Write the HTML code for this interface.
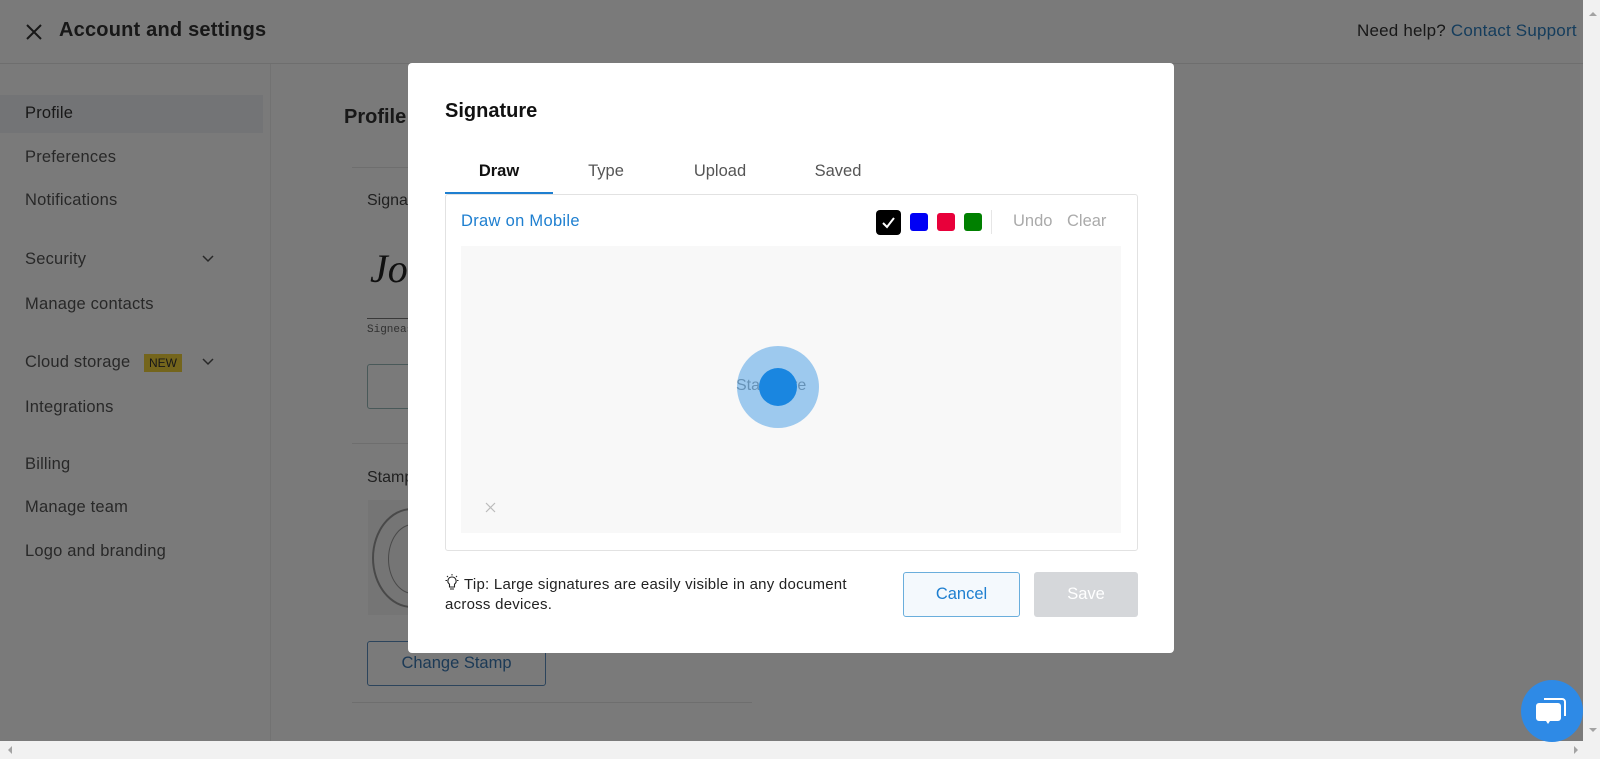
<!DOCTYPE html>
<html><head><meta charset="utf-8"><style>
*{box-sizing:border-box;margin:0;padding:0}
body{width:1600px;height:759px;overflow:hidden;font-family:"Liberation Sans",sans-serif;background:#fff;position:relative;color:#222}
.a{position:absolute;white-space:nowrap}
.side{font-size:16.5px;color:#555;letter-spacing:0.2px}
.ov{position:absolute;left:0;top:0;width:1583px;height:741px;background:rgba(0,0,0,0.52)}
</style></head><body>
<div class="a" style="left:0;top:63px;width:1583px;height:1px;background:#e6e6e6"></div>
<svg class="a" style="left:26px;top:24px" width="16" height="16"><path d="M1 1L15 15M15 1L1 15" stroke="#333" stroke-width="2"/></svg>
<div class="a" style="left:59px;top:19px;font-size:20px;font-weight:bold;color:#333;letter-spacing:0.2px">Account and settings</div>
<div class="a" style="left:1357px;top:21px;font-size:17px;color:#333;letter-spacing:0.2px">Need help? <span style="color:#2d7fc1">Contact Support</span></div>
<div class="a" style="left:0;top:95px;width:263px;height:38px;background:#f0f3f7"></div>
<div class="a side" style="left:25px;top:104px;color:#333">Profile</div>
<div class="a side" style="left:25px;top:148px">Preferences</div>
<div class="a side" style="left:25px;top:191px">Notifications</div>
<div class="a side" style="left:25px;top:250px">Security</div>
<div class="a side" style="left:25px;top:295px">Manage contacts</div>
<div class="a side" style="left:25px;top:353px">Cloud storage</div>
<div class="a" style="left:144px;top:354px;background:#f3d33c;color:#333;font-size:12px;padding:2px 5px">NEW</div>
<div class="a side" style="left:25px;top:398px">Integrations</div>
<div class="a side" style="left:25px;top:455px">Billing</div>
<div class="a side" style="left:25px;top:498px">Manage team</div>
<div class="a side" style="left:25px;top:542px">Logo and branding</div>
<svg class="a" style="left:202px;top:255px" width="12" height="8"><path d="M1 1L6 6L11 1" stroke="#555" fill="none" stroke-width="1.5"/></svg>
<svg class="a" style="left:202px;top:358px" width="12" height="8"><path d="M1 1L6 6L11 1" stroke="#555" fill="none" stroke-width="1.5"/></svg>
<div class="a" style="left:270px;top:64px;width:1px;height:680px;background:#eee"></div>
<div class="a" style="left:344px;top:106px;font-size:20px;font-weight:bold;color:#333">Profile</div>
<div class="a" style="left:352px;top:167px;width:400px;height:1px;background:#e5e5e5"></div>
<div class="a" style="left:367px;top:192px;font-size:16px;color:#444">Signature</div>
<div class="a" style="left:370px;top:245px;font-size:40px;font-family:'Liberation Serif',serif;font-style:italic;color:#222">Jo</div>
<div class="a" style="left:367px;top:318px;width:60px;height:1px;background:#777"></div>
<div class="a" style="left:367px;top:324px;font-size:11px;font-family:'Liberation Mono',monospace;color:#666">Signeasy</div>
<div class="a" style="left:367px;top:364px;width:160px;height:45px;border:1px solid #9bb;border-radius:3px"></div>
<div class="a" style="left:352px;top:443px;width:400px;height:1px;background:#e5e5e5"></div>
<div class="a" style="left:367px;top:469px;font-size:16px;color:#444">Stamp</div>
<div class="a" style="left:368px;top:500px;width:80px;height:115px;background:#f4f4f4"></div>
<div class="a" style="left:372px;top:508px;width:80px;height:100px;border:2px solid #999;border-radius:50%"></div>
<div class="a" style="left:388px;top:524px;width:50px;height:70px;border:1px solid #999;border-radius:50%"></div>
<div class="a" style="left:367px;top:641px;width:179px;height:45px;border:1px solid #5c8fc0;border-radius:3px;color:#3b79b5;font-size:16.5px;text-align:center;line-height:43px">Change Stamp</div>
<div class="a" style="left:352px;top:702px;width:400px;height:1px;background:#e5e5e5"></div>
<div class="ov"></div>
<div class="a" style="left:1583px;top:0;width:17px;height:759px;background:#f1f1f1"></div>
<div class="a" style="left:0;top:741px;width:1583px;height:18px;background:#f1f1f1"></div>
<div class="a" style="left:1589px;top:8px;width:0;height:0;border:4px solid transparent;border-bottom-color:#a3a3a3"></div>
<div class="a" style="left:1589px;top:728px;width:0;height:0;border:4px solid transparent;border-top-color:#a3a3a3"></div>
<div class="a" style="left:1574px;top:746px;width:0;height:0;border:4px solid transparent;border-left-color:#a3a3a3"></div>
<div class="a" style="left:4px;top:746px;width:0;height:0;border:4px solid transparent;border-right-color:#a3a3a3"></div>
<div class="a" style="left:408px;top:63px;width:766px;height:590px;background:#fff;border-radius:4px"></div>
<div class="a" style="left:445px;top:100px;font-size:20px;font-weight:bold;color:#111">Signature</div>
<div class="a" style="left:445px;top:162px;width:108px;text-align:center;font-size:16.5px;color:#111;font-weight:bold">Draw</div>
<div class="a" style="left:566px;top:162px;width:80px;text-align:center;font-size:16.5px;color:#555">Type</div>
<div class="a" style="left:680px;top:162px;width:80px;text-align:center;font-size:16.5px;color:#555">Upload</div>
<div class="a" style="left:798px;top:162px;width:80px;text-align:center;font-size:16.5px;color:#555">Saved</div>
<div class="a" style="left:445px;top:192px;width:108px;height:2px;background:#1e7fd0"></div>
<div class="a" style="left:445px;top:194px;width:693px;height:357px;border:1px solid #e2e2e2;border-radius:3px"></div>
<div class="a" style="left:461px;top:212px;font-size:16.5px;color:#1e7fd0;letter-spacing:0.3px">Draw on Mobile</div>
<div class="a" style="left:876px;top:210px;width:25px;height:25px;background:#000;border-radius:4px"></div>
<svg class="a" style="left:881px;top:215px" width="15" height="15"><path d="M2 8L6 12L13 3" stroke="#fff" stroke-width="2" fill="none"/></svg>
<div class="a" style="left:910px;top:213px;width:18px;height:18px;background:#0000f5;border-radius:3px"></div>
<div class="a" style="left:937px;top:213px;width:18px;height:18px;background:#e8003a;border-radius:3px"></div>
<div class="a" style="left:964px;top:213px;width:18px;height:18px;background:#008000;border-radius:3px"></div>
<div class="a" style="left:991px;top:210px;width:1px;height:24px;background:#e6e6e6"></div>
<div class="a" style="left:1013px;top:212px;font-size:16.5px;color:#aaa">Undo</div>
<div class="a" style="left:1067px;top:212px;font-size:16.5px;color:#aaa">Clear</div>
<div class="a" style="left:461px;top:246px;width:660px;height:287px;background:#f8f8f8"></div>
<svg class="a" style="left:485px;top:502px" width="11" height="11"><path d="M1 1L10 10M10 1L1 10" stroke="#bbb" stroke-width="1.2"/></svg>
<div class="a" style="left:736px;top:377px;font-size:16px;color:#999">Start here</div>
<div class="a" style="left:737px;top:346px;width:82px;height:82px;border-radius:50%;background:rgba(30,135,225,0.42)"></div>
<div class="a" style="left:759px;top:368px;width:38px;height:38px;border-radius:50%;background:#1a86e0"></div>
<svg class="a" style="left:444px;top:574px" width="16" height="18"><path d="M8 3a4 4 0 0 0-2.5 7.2V13h5v-2.8A4 4 0 0 0 8 3zM6 15h4" stroke="#222" stroke-width="1.1" fill="none"/><path d="M8 0v1.5M1.5 6.5h1.5M13 6.5h1.5M3 2l1 1M13 2l-1 1" stroke="#222" stroke-width="1"/></svg>
<div class="a" style="left:464px;top:576px;font-size:15px;color:#222;letter-spacing:0.25px">Tip: Large signatures are easily visible in any document</div>
<div class="a" style="left:445px;top:596px;font-size:15px;color:#222;letter-spacing:0.25px">across devices.</div>
<div class="a" style="left:903px;top:572px;width:117px;height:45px;border:1px solid #6aaedc;background:#f4f9fd;border-radius:3px;color:#1e7fd0;font-size:16.5px;text-align:center;line-height:43px">Cancel</div>
<div class="a" style="left:1034px;top:572px;width:104px;height:45px;background:#d5d7da;border-radius:3px;color:#fff;font-size:16.5px;text-align:center;line-height:45px">Save</div>
<div class="a" style="left:1521px;top:680px;width:62px;height:62px;border-radius:50%;background:#2e8ae6"></div>
<svg class="a" style="left:1535px;top:696px" width="34" height="30"><path d="M9 3h18a3 3 0 0 1 3 3v14" stroke="#fff" stroke-width="2" fill="none"/><path d="M4 7h19a3 3 0 0 1 3 3v12a3 3 0 0 1-3 3h-8l-2 3-2-3H4a3 3 0 0 1-3-3V10a3 3 0 0 1 3-3z" fill="#fff"/></svg>
</body></html>
